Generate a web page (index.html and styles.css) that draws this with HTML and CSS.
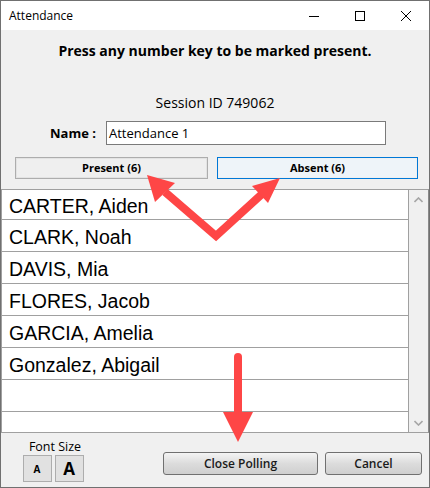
FILE: index.html
```html
<!DOCTYPE html>
<html>
<head>
<meta charset="utf-8">
<link rel="stylesheet" href="styles.css">
</head>
<body>
<div class="window">
  <div class="titlebar">
    <div class="title">Attendance</div>
    <div class="ctrl"><svg width="10" height="10" viewBox="0 0 10 10"><path d="M0 5.5H10" stroke="#000" stroke-width="1"/></svg></div>
    <div class="ctrl"><svg width="10" height="10" viewBox="0 0 10 10"><rect x="0.5" y="0.5" width="9" height="9" fill="none" stroke="#000" stroke-width="1"/></svg></div>
    <div class="ctrl"><svg width="10" height="10" viewBox="0 0 10 10"><path d="M0 0L10 10M10 0L0 10" stroke="#000" stroke-width="1"/></svg></div>
  </div>
  <div class="content">
    <div class="instruction">Press any number key to be marked present.</div>
    <div class="session">Session ID 749062</div>
    <div class="namerow">
      <label class="namelabel">Name :</label>
      <div class="nameinput">Attendance 1</div>
    </div>
    <div class="tabs">
      <div class="tab tab-present">Present (6)</div>
      <div class="tab tab-absent">Absent (6)</div>
    </div>
    <div class="list">
      <div class="rows">
        <div class="row first">CARTER, Aiden</div>
        <div class="row">CLARK, Noah</div>
        <div class="row">DAVIS, Mia</div>
        <div class="row">FLORES, Jacob</div>
        <div class="row">GARCIA, Amelia</div>
        <div class="row">Gonzalez, Abigail</div>
        <div class="row"></div>
        <div class="row last"></div>
      </div>
      <div class="scrollbar">
        <svg width="9" height="6" viewBox="0 0 9 6"><path d="M0.5 5L4.5 1L8.5 5" fill="none" stroke="#a6a6a6" stroke-width="1.6"/></svg>
        <svg width="9" height="6" viewBox="0 0 9 6"><path d="M0.5 1L4.5 5L8.5 1" fill="none" stroke="#a6a6a6" stroke-width="1.6"/></svg>
      </div>
    </div>
    <div class="footer">
      <div class="fontsize">
        <div class="fs-label">Font Size</div>
        <div class="fs-buttons">
          <div class="fs-btn fs-small">A</div>
          <div class="fs-btn fs-big">A</div>
        </div>
      </div>
      <div class="actions">
        <div class="btn btn-close">Close Polling</div>
        <div class="btn btn-cancel">Cancel</div>
      </div>
    </div>
  </div>
  <svg class="overlay" width="430" height="488" viewBox="0 0 430 488">
    <g fill="#fe4646" stroke="none">
      <polyline points="165,192 216,236 262,194" fill="none" stroke="#fe4646" stroke-width="8" stroke-linejoin="miter"/>
      <polygon points="147,175 175,183 155,202"/>
      <polygon points="280,178 252,186 268,203"/>
      <line x1="238" y1="357" x2="238" y2="418" stroke="#fe4646" stroke-width="8" stroke-linecap="round"/>
      <polygon points="223,412 253,412 238,442"/>
    </g>
  </svg>
</div>
</body>
</html>
```
FILE: styles.css
```css
* { box-sizing: border-box; }
html, body { margin: 0; padding: 0; }
body { font-family: "Open Sans", "Noto Sans", sans-serif; color: #000; }

.window {
  position: relative;
  width: 430px;
  height: 488px;
  border: 1px solid #707070;
  display: flex;
  flex-direction: column;
  background: #f0f0f0;
}

.titlebar {
  height: 29px;
  background: #fff;
  display: flex;
  align-items: center;
  flex: none;
}
.title {
  flex: 1;
  padding-left: 8px;
  font-size: 12px;
  padding-bottom: 1px;
}
.ctrl {
  width: 46px;
  height: 29px;
  display: flex;
  align-items: center;
  justify-content: center;
}

.content {
  flex: 1;
  display: flex;
  flex-direction: column;
}

.instruction {
  margin-top: 11px;
  height: 20px;
  line-height: 20px;
  text-align: center;
  font-weight: bold;
  font-size: 14px;
}
.session {
  margin-top: 32px;
  height: 20px;
  line-height: 20px;
  text-align: center;
  font-size: 14px;
}
.namerow {
  margin-top: 8px;
  display: flex;
  align-items: center;
  height: 24px;
}
.namelabel {
  width: 95px;
  text-align: right;
  font-weight: bold;
  font-size: 13px;
}
.nameinput {
  margin-left: 10px;
  width: 280px;
  height: 24px;
  background: #fff;
  border: 1px solid #7a7a7a;
  font-size: 13px;
  line-height: 22px;
  padding-left: 2px;
}

.tabs {
  margin-top: 12px;
  display: flex;
  gap: 9px;
  padding-left: 14px;
  height: 22px;
}
.tab {
  height: 22px;
  font-size: 11px;
  font-weight: bold;
  text-align: center;
  line-height: 20px;
}
.tab-present {
  width: 193px;
  background: #efefef;
  border: 1px solid #adadad;
  box-shadow: inset 0 0 0 1px #e3e3e3;
}
.tab-absent {
  width: 201px;
  border: 1px solid #0078d7;
  box-shadow: inset 0 0 0 1px #f0f0f0;
  background: #eef4f9;
}

.list {
  margin-top: 10px;
  height: 244px;
  display: flex;
  border: 1px solid #a0a0a0;
  border-right: 1px solid #8a8a8a;
  background: #fff;
}
.rows {
  flex: 1;
  border-right: 1px solid #a0a0a0;
  overflow: hidden;
}
.row {
  height: 32px;
  border-bottom: 1px solid #a0a0a0;
  font-family: "Liberation Sans", Arial, sans-serif;
  font-size: 19.5px;
  line-height: 30px;
  padding-top: 2px;
  padding-left: 7px;
}
.row.first {
  height: 30px;
  line-height: 28px;
}
.row.last { border-bottom: none; }

.scrollbar {
  width: 19px;
  background: #f0f0f0;
  display: flex;
  flex-direction: column;
  justify-content: space-between;
  align-items: center;
  padding: 7px 0 6px;
}

.footer {
  flex: 1;
  display: flex;
  align-items: flex-start;
}
.fontsize {
  margin-left: 21px;
  width: 62px;
  display: flex;
  flex-direction: column;
  align-items: center;
}
.fs-label {
  margin-top: 6px;
  font-size: 12.5px;
  line-height: 16px;
  padding-left: 4px;
}
.fs-buttons {
  display: flex;
  gap: 3px;
  margin-top: 0px;
}
.fs-btn {
  width: 29px;
  height: 27px;
  background: #e1e1e1;
  border: 1px solid #adadad;
  font-weight: bold;
  display: flex;
  align-items: center;
  justify-content: center;
}
.fs-small { font-size: 10px; }
.fs-big { font-size: 17px; }

.actions {
  margin-left: 79px;
  margin-top: 19px;
  display: flex;
  gap: 7px;
}
.btn {
  height: 23px;
  border: 1px solid #707070;
  border-radius: 3px;
  background: linear-gradient(#f4f4f4, #dcdcdc 50%, #cfcfcf);
  font-size: 12px;
  font-weight: 600;
  text-align: center;
  line-height: 21px;
  color: #1a1a1a;
}
.btn-close { width: 155px; }
.btn-cancel { width: 97px; }

.overlay {
  position: absolute;
  left: -1px;
  top: -1px;
  pointer-events: none;
}
```
